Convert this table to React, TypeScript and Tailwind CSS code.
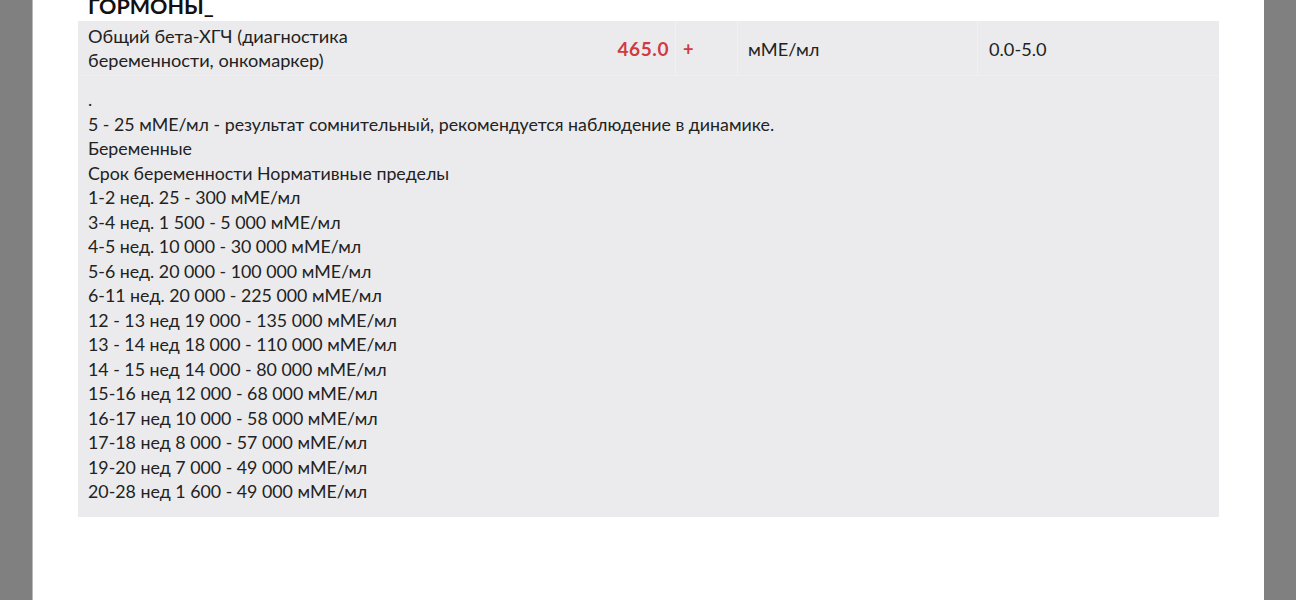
const notes = [
  ".",
  "5 - 25 мМЕ/мл - результат сомнительный, рекомендуется наблюдение в динамике.",
  "Беременные",
  "Срок беременности Нормативные пределы",
  "1-2 нед. 25 - 300 мМЕ/мл",
  "3-4 нед. 1 500 - 5 000 мМЕ/мл",
  "4-5 нед. 10 000 - 30 000 мМЕ/мл",
  "5-6 нед. 20 000 - 100 000 мМЕ/мл",
  "6-11 нед. 20 000 - 225 000 мМЕ/мл",
  "12 - 13 нед 19 000 - 135 000 мМЕ/мл",
  "13 - 14 нед 18 000 - 110 000 мМЕ/мл",
  "14 - 15 нед 14 000 - 80 000 мМЕ/мл",
  "15-16 нед 12 000 - 68 000 мМЕ/мл",
  "16-17 нед 10 000 - 58 000 мМЕ/мл",
  "17-18 нед 8 000 - 57 000 мМЕ/мл",
  "19-20 нед 7 000 - 49 000 мМЕ/мл",
  "20-28 нед 1 600 - 49 000 мМЕ/мл",
];

export default function App() {
  return (
    <div
      className="h-[600px] w-[1296px] overflow-hidden bg-[#808080]"
      style={{ fontFamily: "Lato, 'Noto Sans', sans-serif" }}
    >
      <div className="ml-[32px] flex h-[600px] w-[1232px] flex-col border-l border-[#b9b9b9] bg-white pl-[45px] text-[#222222]">
        {/* раздел */}
        <div className="mt-[-7px] pl-[10px] text-[21.5px] font-bold leading-[26px] text-[#111111]">
          ГОРМОНЫ_
        </div>

        <div className="mt-[2px] w-[1141px] bg-[#ebebed] text-[18.2px] leading-[24.5px]">
          {/* строка результата */}
          <div className="grid h-[54px] grid-cols-[482px_115px_62px_240px_242px] items-center">
            <div className="pl-[10px]">
              Общий бета-ХГЧ (диагностика
              <br />
              беременности, онкомаркер)
            </div>
            <div className="flex h-full items-center justify-end pr-[6px] pt-[3px] text-[19px] font-bold tracking-[0.6px] text-[#d13a40]">
              465.0
            </div>
            <div className="flex h-full items-center border-l border-[#f0f0f1] pl-[7px] pt-[3px] font-bold text-[#d13a40]">
              +
            </div>
            <div className="flex h-full items-center border-l border-[#f0f0f1] pl-[10px] pt-[3px]">
              мМЕ/мл
            </div>
            <div className="flex h-full items-center border-l border-[#f0f0f1] pl-[11px] pt-[3px]">
              0.0-5.0
            </div>
          </div>

          {/* комментарий */}
          <div className="border-t border-[#efeff0] pb-[13px] pl-[10px] pt-[11px] text-[17.8px]">
            {notes.map((line, i) => (
              <div key={i}>{line}</div>
            ))}
          </div>
        </div>
      </div>
    </div>
  );
}
